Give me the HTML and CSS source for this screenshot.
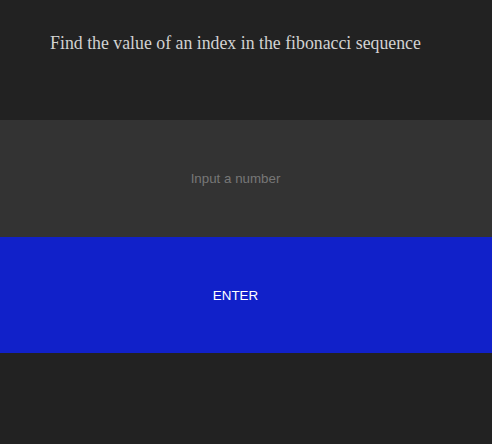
FILE: index.html
```html
<!DOCTYPE html>
<html>
<head>
<meta charset="utf-8">
<link rel="stylesheet" href="styles.css">
</head>
<body>
<div class="app">
  <header class="head">
    <h3 class="title">Find the value of an index in the fibonacci sequence</h3>
  </header>
  <input class="num" type="text" placeholder="Input a number">
  <button class="enter">ENTER</button>
</div>
</body>
</html>
```
FILE: styles.css
```css
html, body {
  margin: 0;
  padding: 0;
  background: #222222;
  height: 100%;
}
.app {
  display: flex;
  flex-direction: column;
}
.head {
  height: 120px;
  box-sizing: border-box;
  padding: 30px 21px 0 0;
}
.title {
  margin: 0;
  font-family: "Liberation Serif", serif;
  font-weight: normal;
  font-size: 17.8px;
  line-height: 26px;
  color: #d2d2d2;
  text-align: center;
}
.num {
  display: block;
  width: 100%;
  height: 117px;
  box-sizing: border-box;
  border: none;
  outline: none;
  margin: 0;
  padding: 0 21px 0 0;
  background: #333333;
  color: #dddddd;
  text-align: center;
  font-family: "Liberation Sans", Arial, sans-serif;
  font-size: 13.33px;
}
.num::placeholder {
  color: #777777;
}
.enter {
  display: block;
  width: 100%;
  height: 116px;
  box-sizing: border-box;
  border: none;
  margin: 0;
  padding: 0 21px 0 0;
  background: #1121c9;
  color: #ffffff;
  text-align: center;
  font-family: "Liberation Sans", Arial, sans-serif;
  font-size: 13.4px;
}
```
